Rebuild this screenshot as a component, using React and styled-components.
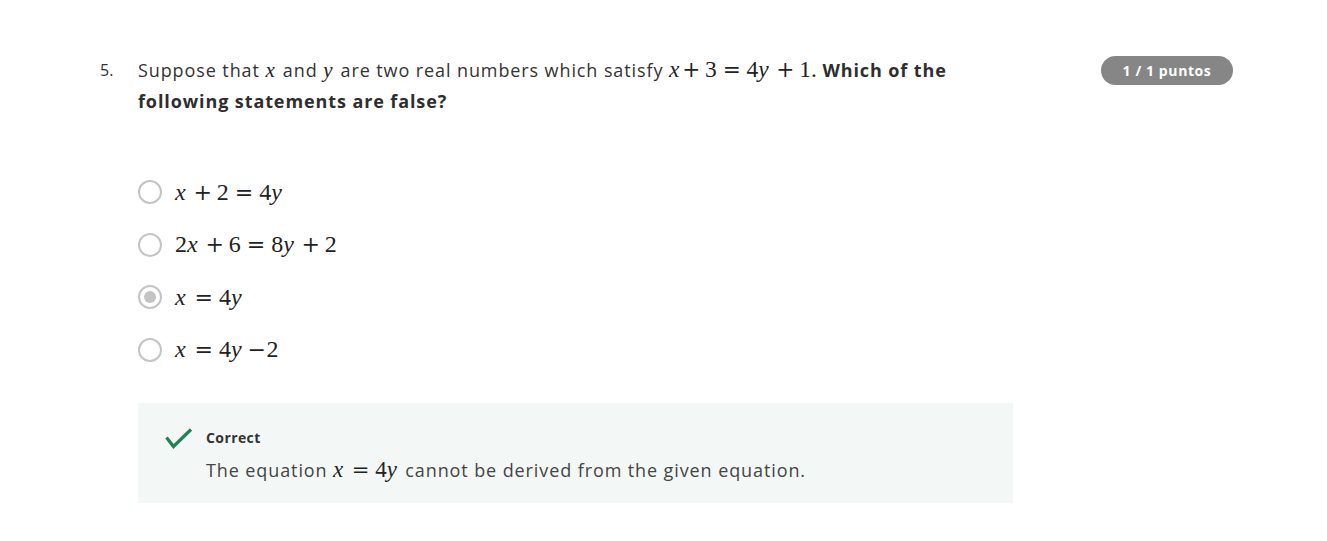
import React from "react";
import styled, { createGlobalStyle } from "styled-components";

const Global = createGlobalStyle`
  body { margin: 0; background: #fff; font-family: "Open Sans", sans-serif; color: #373a3c; }
`;

const Page = styled.div`
  padding: 55px 94px 0 100px;
  display: flex;
  align-items: flex-start;
`;

const Number = styled.div`
  width: 38px;
  font-size: 16px;
  line-height: 31px;
  color: #333;
`;

const Main = styled.div`
  width: 875px;
`;

const Question = styled.div`
  font-size: 18px;
  letter-spacing: 0.9px;
  line-height: 31px;
  color: #333;
  width: 840px;
  b { font-weight: 700; color: #2e2e2e; letter-spacing: 0.9px; }
`;

const M = styled.span`
  font-family: "Liberation Serif", "DejaVu Serif", serif;
  font-size: ${p => p.$size || 23}px;
  line-height: 1;
  letter-spacing: 0;
  color: #222;
  white-space: nowrap;
`;

const Mi = styled.i`
  font-style: italic;
  margin-right: 0.12em;
`;

const Op = styled.span`
  font-family: "DejaVu Serif", serif;
  font-size: 0.92em;
  margin-left: ${p => p.$left};
  margin-right: ${p => p.$right};
`;

const Options = styled.div`
  margin-top: 63px;
  display: flex;
  flex-direction: column;
  gap: 28.5px;
`;

const Option = styled.label`
  display: flex;
  align-items: center;
  gap: 13px;
  height: 24px;
`;

const Radio = styled.span`
  width: 24px;
  height: 24px;
  box-sizing: border-box;
  border-radius: 50%;
  border: 2px solid #c4c4c4;
  display: flex;
  align-items: center;
  justify-content: center;
  &::after {
    content: "";
    width: 12px;
    height: 12px;
    border-radius: 50%;
    background: ${p => (p.$checked ? "#c4c4c4" : "transparent")};
  }
`;

const Feedback = styled.div`
  margin-top: 41px;
  background: #f3f8f6;
  height: 100px;
  box-sizing: border-box;
  padding: 25px 0 0 27px;
  display: flex;
  gap: 13px;
`;

const FeedbackBody = styled.div`
  display: flex;
  flex-direction: column;
`;

const Title = styled.div`
  font-size: 14px;
  letter-spacing: 0.4px;
  font-weight: 700;
  color: #333;
  line-height: 20px;
`;

const Explain = styled.div`
  margin-top: 6px;
  font-size: 18px;
  letter-spacing: 0.9px;
  line-height: 32px;
  color: #444;
`;

const Badge = styled.div`
  margin-left: auto;
  margin-top: 1px;
  height: 29px;
  width: 132px;
  border-radius: 15px;
  background: #868686;
  color: #fff;
  font-size: 14px;
  letter-spacing: 0.6px;
  font-weight: 700;
  display: flex;
  align-items: center;
  justify-content: center;
`;

const X = () => <Mi>x</Mi>;
const Y = () => <Mi>y</Mi>;
const Plus = ({ tight }) => <Op $left={tight ? "0" : "0.22em"} $right="0.22em">+</Op>;
const Minus = () => <Op $left="0.14em" $right="0.02em">−</Op>;
const Eq = () => <Op $left="0.27em" $right="0.27em">=</Op>;

export default function App() {
  return (
    <>
      <Global />
      <Page>
        <Number>5.</Number>
        <Main>
          <Question>
            Suppose that <M $size={21}><X /></M> and <M $size={21}><Y /></M> are two real numbers which satisfy{" "}
            <M $size={23.5}><X /><Plus tight />3<Eq />4<Y /><Plus />1.</M> <b>Which of the following statements are false?</b>
          </Question>
          <Options>
            <Option><Radio /><M $size={24}><X /><Plus />2<Eq />4<Y /></M></Option>
            <Option><Radio /><M $size={24}>2<X /><Plus />6<Eq />8<Y /><Plus />2</M></Option>
            <Option><Radio $checked /><M $size={24}><X /><Eq />4<Y /></M></Option>
            <Option><Radio /><M $size={24}><X /><Eq />4<Y /><Minus />2</M></Option>
          </Options>
          <Feedback>
            <svg width="28" height="22" viewBox="0 0 28 22">
              <path d="M1.5 9.5 L8.5 18.5 L26 1.5" fill="none" stroke="#1e8455" strokeWidth="3.2" />
            </svg>
            <FeedbackBody>
              <Title>Correct</Title>
              <Explain>
                The equation <M><X /><Eq />4<Y /></M> cannot be derived from the given equation.
              </Explain>
            </FeedbackBody>
          </Feedback>
        </Main>
        <Badge>1 / 1 puntos</Badge>
      </Page>
    </>
  );
}
